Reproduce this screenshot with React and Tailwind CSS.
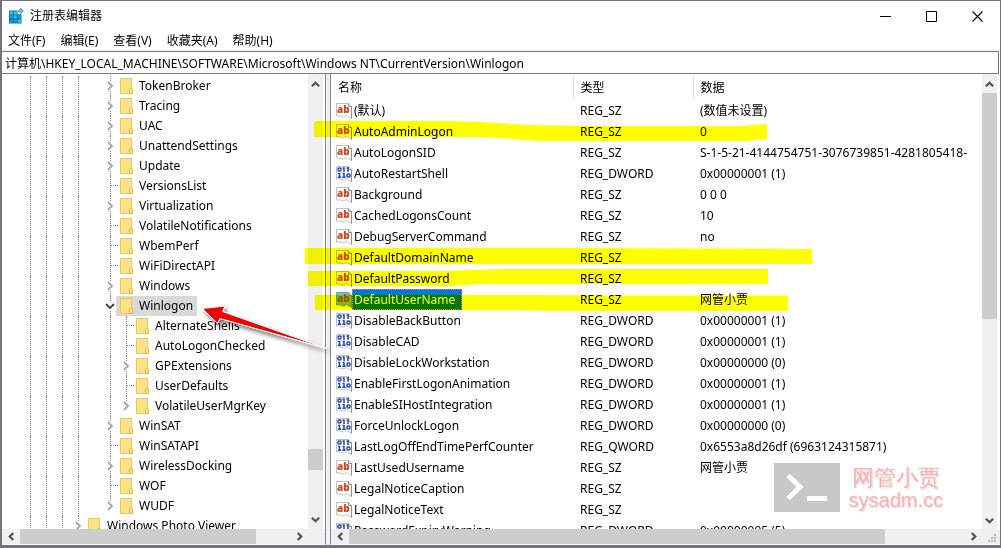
import React from 'react';

const menus = ['文件(F)', '编辑(E)', '查看(V)', '收藏夹(A)', '帮助(H)'];

// kind: "open" | "closed" | "leaf"
const tree = [
  { label: 'TokenBroker', level: 5, kind: 'closed' },
  { label: 'Tracing', level: 5, kind: 'closed' },
  { label: 'UAC', level: 5, kind: 'closed' },
  { label: 'UnattendSettings', level: 5, kind: 'closed' },
  { label: 'Update', level: 5, kind: 'closed' },
  { label: 'VersionsList', level: 5, kind: 'leaf' },
  { label: 'Virtualization', level: 5, kind: 'closed' },
  { label: 'VolatileNotifications', level: 5, kind: 'leaf' },
  { label: 'WbemPerf', level: 5, kind: 'leaf' },
  { label: 'WiFiDirectAPI', level: 5, kind: 'leaf' },
  { label: 'Windows', level: 5, kind: 'closed' },
  { label: 'Winlogon', level: 5, kind: 'open', selected: true },
  { label: 'AlternateShells', level: 6, kind: 'leaf' },
  { label: 'AutoLogonChecked', level: 6, kind: 'leaf' },
  { label: 'GPExtensions', level: 6, kind: 'closed' },
  { label: 'UserDefaults', level: 6, kind: 'leaf' },
  { label: 'VolatileUserMgrKey', level: 6, kind: 'closed', last: true },
  { label: 'WinSAT', level: 5, kind: 'closed' },
  { label: 'WinSATAPI', level: 5, kind: 'leaf' },
  { label: 'WirelessDocking', level: 5, kind: 'closed' },
  { label: 'WOF', level: 5, kind: 'leaf' },
  { label: 'WUDF', level: 5, kind: 'closed', last: true },
  { label: 'Windows Photo Viewer', level: 3, kind: 'closed', last: true },
];

const values = [
  ['(默认)', 'REG_SZ', '(数值未设置)'],
  ['AutoAdminLogon', 'REG_SZ', '0'],
  ['AutoLogonSID', 'REG_SZ', 'S-1-5-21-4144754751-3076739851-4281805418-'],
  ['AutoRestartShell', 'REG_DWORD', '0x00000001 (1)'],
  ['Background', 'REG_SZ', '0 0 0'],
  ['CachedLogonsCount', 'REG_SZ', '10'],
  ['DebugServerCommand', 'REG_SZ', 'no'],
  ['DefaultDomainName', 'REG_SZ', ''],
  ['DefaultPassword', 'REG_SZ', ''],
  ['DefaultUserName', 'REG_SZ', '网管小贾'],
  ['DisableBackButton', 'REG_DWORD', '0x00000001 (1)'],
  ['DisableCAD', 'REG_DWORD', '0x00000001 (1)'],
  ['DisableLockWorkstation', 'REG_DWORD', '0x00000000 (0)'],
  ['EnableFirstLogonAnimation', 'REG_DWORD', '0x00000001 (1)'],
  ['EnableSIHostIntegration', 'REG_DWORD', '0x00000001 (1)'],
  ['ForceUnlockLogon', 'REG_DWORD', '0x00000000 (0)'],
  ['LastLogOffEndTimePerfCounter', 'REG_QWORD', '0x6553a8d26df (6963124315871)'],
  ['LastUsedUsername', 'REG_SZ', '网管小贾'],
  ['LegalNoticeCaption', 'REG_SZ', ''],
  ['LegalNoticeText', 'REG_SZ', ''],
  ['PasswordExpiryWarning', 'REG_DWORD', '0x00000005 (5)'],
];

function RegeditIcon() {
  return (
    <svg className="h-4 w-4 shrink-0" viewBox="0 0 16 16" aria-hidden="true">
      <path d="M1 2.500h8.600v3.700H13.500V15.500H1z" fill="#0a6fa6" />
      <path d="M1.700 3.200h3.200v3.300H1.700zM5.700 3.200h3.200v3.300H5.700zM5.700 7.300h3.200v3.300H5.700zM9.700 11.400h3.200v3.300H9.700z" fill="#35bdf0" />
      <path d="M1.700 7.300h3.200v3.300H1.700zM9.700 7.300h3.200v3.300H9.700zM1.700 11.400h3.200v3.300H1.700zM5.700 11.400h3.200v3.300H5.700z" fill="#1a9ddb" />
      <path d="M12.800.3l2.600 2.500-2.600 2.600-2.500-2.600z" fill="#62ccf4" stroke="#0b6ea8" strokeWidth=".7" />
    </svg>
  );
}

function FolderIcon() {
  return (
    <svg className="h-4 w-[14px] shrink-0" viewBox="0 0 14 16" aria-hidden="true">
      <path d="M.5.500h11v11h1v4H.5z" fill="#ffe284" stroke="#e8c766" />
      <path d="M9.500 15.500V11.500q0-1 1-1h1q1 0 1 1v4z" fill="#ffe9a0" stroke="#deb240" />
    </svg>
  );
}

function ValueIcon({ binary, selected }) {
  return (
    <svg className="h-4 w-4 shrink-0" viewBox="0 0 16 16" aria-hidden="true">
      <path
        d="M.5.500h12l3 3v12q-1.500-1.500-3-1.700-1-.3-2-1.300-1.500.5-2 1.500-1.500.3-2.500-.5-2-1-5.500-.5z"
        fill={selected ? '#7fbbe8' : '#fff'}
        stroke={selected ? '#6d9fc4' : '#c0c0c0'}
      />
      <path d="M12.500.5v3h3v12" fill="none" stroke="#8f8f8f" />
      {binary ? (
        <g fill="none" stroke="#2547b8" strokeWidth="1.500">
          <rect x="2" y="2" width="3" height="3" rx="1" />
          <path d="M6.500 2h1.500v4M10.500 2h1.500v4M2 7.500h1.500v4M1.800 11.200h3.400M6.500 7.500h1.500v4M6.300 11.200h3.400" />
          <rect x="11" y="8" width="3" height="3" rx="1" />
        </g>
      ) : (
        <text x="1" y="10" fill={selected ? '#8a5b52' : '#cf4a24'} fontFamily="Open Sans, sans-serif" fontWeight="800" fontSize="10">
          ab
        </text>
      )}
    </svg>
  );
}

const chevrons = {
  up: 'M1 7l4-4 4 4',
  down: 'M1 3l4 4 4-4',
  left: 'M7 1L3 5l4 4',
  right: 'M3 1l4 4-4 4',
};

function Chevron({ dir, className, width = 2 }) {
  return (
    <svg className={className} viewBox="0 0 10 10" aria-hidden="true">
      <path d={chevrons[dir]} fill="none" stroke="currentColor" strokeWidth={width} />
    </svg>
  );
}

function ScrollButton({ dir, label }) {
  return (
    <button type="button" aria-label={label} className="flex h-full w-full items-center justify-center text-[#505050]">
      <Chevron dir={dir} className="h-[9px] w-[9px]" width={2.4} />
    </button>
  );
}

function VScroll({ before, thumb, after }) {
  return (
    <div className="flex w-[15px] shrink-0 flex-col bg-[#f0f0f0]">
      <div className="h-[19px] shrink-0 pt-[2px]"><ScrollButton dir="up" label="向上滚动" /></div>
      <div style={{ flexGrow: before }} />
      <div className="bg-[#cdcdcd]" style={{ flexGrow: thumb }} />
      <div style={{ flexGrow: after }} />
      <div className="h-[18px] shrink-0"><ScrollButton dir="down" label="向下滚动" /></div>
    </div>
  );
}

function HScroll({ thumb, after }) {
  return (
    <div className="flex h-[15px] min-w-0 flex-1 bg-[#f0f0f0]">
      <div className="w-[18px] shrink-0"><ScrollButton dir="left" label="向左滚动" /></div>
      <div className="bg-[#cdcdcd]" style={{ flexGrow: thumb }} />
      <div style={{ flexGrow: after }} />
      <div className="w-[18px] shrink-0"><ScrollButton dir="right" label="向右滚动" /></div>
    </div>
  );
}

function GuideCell({ line }) {
  return (
    <span className="flex w-4 shrink-0 justify-center self-stretch">
      {line && <span className="border-l border-dotted border-[#808080]" />}
    </span>
  );
}

function TreeRow({ item }) {
  const guides = Array.from({ length: item.level }, (_, i) => i < 4 || i === 5);
  return (
    <li className="flex h-5 items-center" role="treeitem" aria-selected={!!item.selected}>
      {guides.map((line, i) => (
        <GuideCell key={i} line={line} />
      ))}
      {item.kind === 'leaf' ? (
        <span className="flex w-4 shrink-0 self-stretch pl-2">
          <span className="border-l border-dotted border-[#808080]" />
          <span className="h-1/2 flex-1 border-b border-dotted border-[#808080]" />
        </span>
      ) : (
        <span className="flex w-4 shrink-0 flex-col items-center self-stretch">
          <span className="flex-1 border-l border-dotted border-[#808080]" />
          <button
            type="button"
            aria-label={item.kind === 'open' ? '折叠' : '展开'}
            className={item.kind === 'open' ? 'text-[#404040]' : 'text-[#a6a6a6]'}
          >
            <Chevron dir={item.kind === 'open' ? 'down' : 'right'} className="h-[10px] w-[10px]" width={1.8} />
          </button>
          <span className={item.last ? 'flex-1' : 'flex-1 border-l border-dotted border-[#808080]'} />
        </span>
      )}
      <button
        type="button"
        className={`-ml-[2px] flex h-5 items-center gap-[5px] whitespace-nowrap pr-1 pl-1 ${item.selected ? 'bg-[#d9d9d9]' : ''}`}
      >
        <FolderIcon />
        <span>{item.label}</span>
      </button>
    </li>
  );
}

function Annotations() {
  return (
    <>
      <svg className="pointer-events-none absolute inset-0 h-full w-full mix-blend-multiply" aria-hidden="true">
        <g fill="#ffff00">
          <path d="M314 121L448 121 478 122 530 125 600 126 740 126 767 124V139L745 141H540L500 138 470 137H314z" />
          <path d="M305 248H560L812 249V264H560L305 264z" />
          <path d="M308 271H440L500 269H768V284H480L450 286H308z" />
          <path d="M315 295H540L600 295.500H788V311H550L520 310H315z" />
        </g>
      </svg>
      <svg className="pointer-events-none absolute inset-0 h-full w-full" aria-hidden="true">
        <defs>
          <filter id="arrow-shadow" x="-20%" y="-30%" width="150%" height="180%">
            <feDropShadow dx="2" dy="3" stdDeviation="2" floodColor="#000" floodOpacity=".55" />
          </filter>
        </defs>
        <path
          d="M202.500 308.500L225 306 222.500 311.500 327 348.500 220 318.500 217.500 323.500z"
          fill="#f00000"
          stroke="#fff"
          strokeWidth="1"
          strokeLinejoin="round"
          filter="url(#arrow-shadow)"
        />
      </svg>
    </>
  );
}

function Watermark() {
  return (
    <div className="pointer-events-none absolute right-[58px] bottom-9 flex items-center gap-[9px]">
      <svg className="h-[49px] w-[66px]" viewBox="0 0 66 49" aria-hidden="true">
        <path d="M0 0h66v49H0z" fill="#c8c8c8" />
        <path d="M14 12.500L26 24 14 35.500" fill="none" stroke="#fff" strokeWidth="5" />
        <path d="M33 33h20v5H33z" fill="#fff" />
      </svg>
      <div className="text-center text-[#f5b5b5] [text-shadow:1px_1px_2px_#e8caca]">
        <p className="text-[22px] leading-6 font-light">网管小贾</p>
        <p className="font-['Liberation_Sans',sans-serif] text-[20px] leading-6">sysadm.cc</p>
      </div>
    </div>
  );
}

export default function App() {
  return (
    <div className="relative h-screen overflow-hidden">
      <div className="flex h-full flex-col border-t border-r border-b-[3px] border-l-2 border-[#737378] bg-white font-['Noto_Sans','Noto_Sans_CJK_SC',sans-serif] text-xs text-black">
        <header className="flex h-[30px] shrink-0 items-center">
          <div className="flex flex-1 items-center gap-[6px] pl-[6px]">
            <RegeditIcon />
            <h1>注册表编辑器</h1>
          </div>
          <div className="flex self-stretch">
            <button type="button" aria-label="最小化" className="flex w-[46px] items-center justify-center">
              <svg className="h-[11px] w-[11px]" viewBox="0 0 11 11"><path d="M0 5.500h11" stroke="#000" /></svg>
            </button>
            <button type="button" aria-label="最大化" className="flex w-[46px] items-center justify-center">
              <svg className="h-[11px] w-[11px]" viewBox="0 0 11 11"><path d="M.5.500h10v10H.5z" fill="none" stroke="#000" /></svg>
            </button>
            <button type="button" aria-label="关闭" className="flex w-[46px] items-center justify-center">
              <svg className="h-[11px] w-[11px]" viewBox="0 0 11 11"><path d="M.5.500l10 10M10.500.500l-10 10" stroke="#000" strokeWidth="1.100" /></svg>
            </button>
          </div>
        </header>

        <nav className="flex h-5 shrink-0 items-center gap-[15px] border-b border-[#f0f0f0] pl-[6px]">
          {menus.map((m) => (
            <button type="button" key={m}>{m}</button>
          ))}
        </nav>

        <input
          aria-label="地址"
          className="mr-px h-[23px] shrink-0 border-y border-r border-[#7a7a7a] px-[3px] text-xs outline-none"
          defaultValue="计算机\HKEY_LOCAL_MACHINE\SOFTWARE\Microsoft\Windows NT\CurrentVersion\Winlogon"
        />

        <main className="flex min-h-0 flex-1 bg-[#f0f0f0]">
          <section className="flex w-[324px] shrink-0 flex-col border-r border-b border-r-[#828790] border-b-white bg-[#f0f0f0]">
            <div className="flex min-h-0 flex-1">
              <div className="min-w-0 flex-1 overflow-hidden bg-white pt-[2px] pl-5">
                <ul role="tree">
                  {tree.map((item) => (
                    <TreeRow key={item.label} item={item} />
                  ))}
                </ul>
              </div>
              <VScroll before={355} thumb={21} after={41} />
              <div className="w-[2px] bg-white" />
            </div>
            <div className="flex">
              <HScroll thumb={237} after={34} />
              <div className="w-[17px]" />
            </div>
          </section>

          <section className="ml-1 flex min-w-0 flex-1 flex-col border-b border-l border-b-white border-l-[#828790] bg-white">
            <div className="flex min-h-0 flex-1">
              <div className="min-w-0 flex-1 overflow-hidden pt-[2px]">
                <table className="w-full table-fixed border-collapse text-left">
                  <thead>
                    <tr className="h-6">
                      <th scope="col" className="w-[242px] border-r border-[#e5e5e5] p-0 pl-[7px] font-normal">名称</th>
                      <th scope="col" className="w-[120px] border-r border-[#e5e5e5] p-0 pl-[7px] font-normal">类型</th>
                      <th scope="col" className="p-0 pl-[7px] font-normal">数据</th>
                    </tr>
                  </thead>
                  <tbody>
                    {values.map(([name, type, data]) => {
                      const selected = name === 'DefaultUserName';
                      return (
                        <tr key={name} className="h-[21px]">
                          <td className="p-0 pl-[5px]">
                            <div className="flex h-[21px] items-center">
                              <ValueIcon binary={type !== 'REG_SZ'} selected={selected} />
                              <span
                                className={
                                  selected
                                    ? 'flex items-center self-stretch border border-dotted border-[#ff8728] bg-[#0078d7] pr-[6px] pl-px text-white'
                                    : 'pl-[2px]'
                                }
                              >
                                {name}
                              </span>
                            </div>
                          </td>
                          <td className="p-0 pl-[7px]">{type}</td>
                          <td className="overflow-hidden p-0 pl-[7px] whitespace-nowrap">{data}</td>
                        </tr>
                      );
                    })}
                  </tbody>
                </table>
              </div>
              <VScroll before={0} thumb={226} after={192} />
              <div className="w-[3px]" />
            </div>
            <div className="flex">
              <HScroll thumb={536} after={79} />
              <div className="flex w-[18px] items-end justify-end bg-[#f0f0f0] pr-1 pb-[2px]">
                <svg className="h-2 w-2" viewBox="0 0 8 8" aria-hidden="true">
                  <path d="M6 0h2v2H6zM3 3h2v2H3zM6 3h2v2H6zM0 6h2v2H0zM3 6h2v2H3zM6 6h2v2H6z" fill="#b5b5b5" />
                </svg>
              </div>
            </div>
          </section>
        </main>
      </div>

      <Annotations />
      <Watermark />
    </div>
  );
}
